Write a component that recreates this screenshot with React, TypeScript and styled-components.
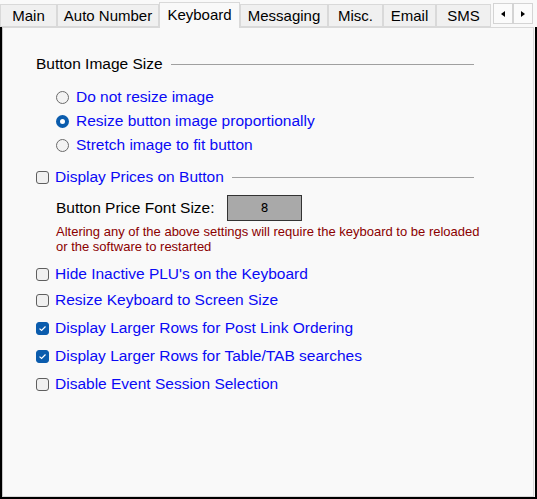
import React from "react";
import styled, { createGlobalStyle } from "styled-components";

const Global = createGlobalStyle`
  html, body { margin: 0; padding: 0; background: #f9f9f9; }
  body { font-family: "Liberation Sans", Arial, sans-serif; }
`;

const Window = styled.div`
  width: 537px;
  height: 499px;
  box-sizing: border-box;
  display: flex;
  flex-direction: column;
  background: #f9f9f9;
  font-family: "Liberation Sans", Arial, sans-serif;
`;

const TabStrip = styled.div`
  height: 27px;
  flex: none;
  display: flex;
  align-items: flex-end;
  position: relative;
  z-index: 1;
`;

const Tab = styled.div<{ $w: number; $active?: boolean }>`
  width: ${(p) => p.$w}px;
  height: ${(p) => (p.$active ? 26 : 23)}px;
  box-sizing: border-box;
  flex: none;
  display: flex;
  align-items: center;
  justify-content: center;
  padding-bottom: ${(p) => (p.$active ? 2 : 0)}px;
  margin-bottom: ${(p) => (p.$active ? -1 : 0)}px;
  background: ${(p) => (p.$active ? "#f9f9f9" : "#f0f0f0")};
  border: 1px solid #d9d9d9;
  border-bottom: ${(p) => (p.$active ? "none" : "1px solid #d9d9d9")};
  font-size: 15px;
  color: #000;
  white-space: nowrap;
`;

const ScrollGroup = styled.div`
  display: flex;
  margin-left: 2px;
  margin-bottom: 3px;
`;

const ScrollBtn = styled.div`
  width: 20px;
  height: 21px;
  box-sizing: border-box;
  background: #fbfbfb;
  border: 1px solid #d4d4d4;
  display: flex;
  align-items: center;
  justify-content: center;
`;

const Frame = styled.div`
  flex: 1;
  min-height: 0;
  border-left: 2px solid #000;
  border-right: 2px solid #000;
  border-bottom: 2px solid #000;
  display: flex;
`;

const Pane = styled.div`
  flex: 1;
  min-width: 0;
  margin-right: 1px;
  border: 1px solid #d9d9d9;
  border-left-color: #c8c8c8;
  background: #f9f9f9;
  padding: 27px 59px 0 33px;
  display: flex;
  flex-direction: column;
  color: #000;
  font-size: 15.5px;
`;

const GroupHeader = styled.div`
  display: flex;
  align-items: center;
  height: 18px;
  gap: 6px;
`;

const Rule = styled.div`
  flex: 1;
  height: 1px;
  background: #a0a0a0;
  margin-left: 2px;
`;

const RadioList = styled.div`
  display: flex;
  flex-direction: column;
  margin: 12px 0 0 20px;
`;

const OptionRow = styled.div<{ $top?: number; $gap?: number }>`
  display: flex;
  align-items: center;
  height: 24px;
  margin-top: ${(p) => p.$top ?? 0}px;
  gap: ${(p) => p.$gap ?? 6}px;
`;

const BlueLabel = styled.span`
  color: #0a0af5;
  white-space: nowrap;
`;

const RadioDot = styled.span<{ $on?: boolean }>`
  width: 13px;
  height: 13px;
  box-sizing: border-box;
  border-radius: 50%;
  flex: none;
  background: ${(p) => (p.$on ? "#ffffff" : "#f3f3f3")};
  border: ${(p) => (p.$on ? "4px solid #0b5cad" : "1px solid #6b6b6b")};
`;

const CheckBox = styled.span<{ $on?: boolean }>`
  width: 13px;
  height: 13px;
  box-sizing: border-box;
  border-radius: 3px;
  flex: none;
  display: flex;
  align-items: center;
  justify-content: center;
  background: ${(p) => (p.$on ? "#0b5cad" : "#f0f0f0")};
  border: 1px solid ${(p) => (p.$on ? "#0b5cad" : "#5f5f5f")};
`;

const PriceRow = styled.div`
  display: flex;
  align-items: center;
  margin: 6px 0 0 20px;
  height: 26px;
`;

const PriceLabel = styled.span`
  width: 171px;
  flex: none;
`;

const SizeBox = styled.div`
  width: 75px;
  height: 26px;
  box-sizing: border-box;
  background: #a9a9a9;
  border: 1px solid #333;
  display: flex;
  align-items: center;
  justify-content: center;
  font-size: 12px;
  font-family: "DejaVu Sans", sans-serif;
`;

const Warning = styled.div`
  margin: 3px 0 0 20px;
  font-size: 13px;
  line-height: 15px;
  color: #8b0000;
  white-space: nowrap;
`;

const CheckList = styled.div`
  display: flex;
  flex-direction: column;
  margin-top: 8px;
`;

const Check = ({ on }: { on?: boolean }) => (
  <CheckBox $on={on}>
    {on && (
      <svg width="9" height="7" viewBox="0 0 9 7">
        <path d="M1.5 3.6 L3.6 5.5 L7.5 1.5" fill="none" stroke="#fff" strokeWidth="1.2" />
      </svg>
    )}
  </CheckBox>
);

const tabs = [
  { label: "Main", w: 57 },
  { label: "Auto Number", w: 102 },
  { label: "Keyboard", w: 81, active: true },
  { label: "Messaging", w: 88 },
  { label: "Misc.", w: 55 },
  { label: "Email", w: 53 },
  { label: "SMS", w: 55 },
];

const radios = [
  { label: "Do not resize image" },
  { label: "Resize button image proportionally", on: true },
  { label: "Stretch image to fit button" },
];

const checks = [
  { label: "Hide Inactive PLU's on the Keyboard", top: 0 },
  { label: "Resize Keyboard to Screen Size", top: 2 },
  { label: "Display Larger Rows for Post Link Ordering", on: true, top: 4 },
  { label: "Display Larger Rows for Table/TAB searches", on: true, top: 4 },
  { label: "Disable Event Session Selection", top: 4 },
];

export default function App() {
  return (
    <Window>
      <Global />
      <TabStrip>
        {tabs.map((t) => (
          <Tab key={t.label} $w={t.w} $active={t.active}>
            {t.label}
          </Tab>
        ))}
        <ScrollGroup>
          <ScrollBtn>
            <svg width="4" height="6" viewBox="0 0 4 6">
              <path d="M4 0 L0 3 L4 6 Z" fill="#000" />
            </svg>
          </ScrollBtn>
          <ScrollBtn>
            <svg width="4" height="6" viewBox="0 0 4 6">
              <path d="M0 0 L4 3 L0 6 Z" fill="#000" />
            </svg>
          </ScrollBtn>
        </ScrollGroup>
      </TabStrip>
      <Frame>
        <Pane>
          <GroupHeader>
            <span>Button Image Size</span>
            <Rule />
          </GroupHeader>
          <RadioList>
            {radios.map((r) => (
              <OptionRow key={r.label} $gap={7}>
                <RadioDot $on={r.on} />
                <BlueLabel>{r.label}</BlueLabel>
              </OptionRow>
            ))}
          </RadioList>
          <OptionRow $top={8}>
            <Check />
            <BlueLabel>Display Prices on Button</BlueLabel>
            <Rule />
          </OptionRow>
          <PriceRow>
            <PriceLabel>Button Price Font Size:</PriceLabel>
            <SizeBox>8</SizeBox>
          </PriceRow>
          <Warning>
            Altering any of the above settings will require the keyboard to be reloaded
            <br />
            or the software to restarted
          </Warning>
          <CheckList>
            {checks.map((c) => (
              <OptionRow key={c.label} $top={c.top}>
                <Check on={c.on} />
                <BlueLabel>{c.label}</BlueLabel>
              </OptionRow>
            ))}
          </CheckList>
        </Pane>
      </Frame>
    </Window>
  );
}
